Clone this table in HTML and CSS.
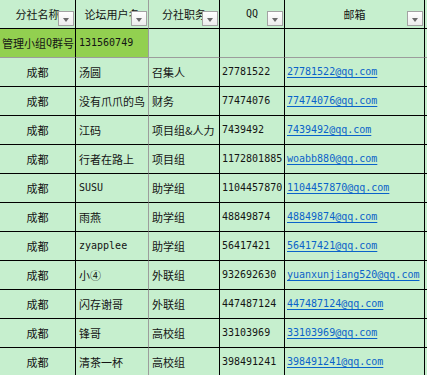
FILE: index.html
```html
<!DOCTYPE html>
<html lang="zh-CN">
<head>
<meta charset="utf-8">
<title>分社通讯录</title>
<link rel="stylesheet" href="styles.css">
</head>
<body>
<div class="sheet">
  <div class="cell head"><span class="htext">分社名称</span><span class="dd"></span></div>
  <div class="cell head soft-r"><span class="htext">论坛用户名</span><span class="dd"></span></div>
  <div class="cell head"><span class="htext">分社职务</span><span class="dd"></span></div>
  <div class="cell head"><span class="htext en">QQ</span><span class="dd"></span></div>
  <div class="cell head"><span class="htext">邮箱</span><span class="dd"></span></div>
  <div class="cell pad"></div>

  <div class="cell hl soft-b tight">管理小组<span class="en">Q</span>群号</div>
  <div class="cell hl soft-b soft-r"><span class="en">131560749</span></div>
  <div class="cell soft-b"></div>
  <div class="cell soft-b"></div>
  <div class="cell soft-b"></div>
  <div class="cell pad soft-b"></div>

  <div class="cell ctr">成都</div><div class="cell soft-r">汤圆</div><div class="cell">召集人</div><div class="cell en">27781522</div><div class="cell"><a class="mail en" href="#">27781522@qq.com</a></div><div class="cell pad"></div>
  <div class="cell ctr">成都</div><div class="cell soft-r">没有爪爪的鸟</div><div class="cell">财务</div><div class="cell en">77474076</div><div class="cell"><a class="mail en" href="#">77474076@qq.com</a></div><div class="cell pad"></div>
  <div class="cell ctr">成都</div><div class="cell soft-r">江码</div><div class="cell">项目组&amp;人力</div><div class="cell en">7439492</div><div class="cell"><a class="mail en" href="#">7439492@qq.com</a></div><div class="cell pad"></div>
  <div class="cell ctr">成都</div><div class="cell soft-r">行者在路上</div><div class="cell">项目组</div><div class="cell en">1172801885</div><div class="cell"><a class="mail en" href="#">woabb880@qq.com</a></div><div class="cell pad"></div>
  <div class="cell ctr">成都</div><div class="cell soft-r"><span class="en">SUSU</span></div><div class="cell">助学组</div><div class="cell en">1104457870</div><div class="cell"><a class="mail en" href="#">1104457870@qq.com</a></div><div class="cell pad"></div>
  <div class="cell ctr">成都</div><div class="cell soft-r">雨燕</div><div class="cell">助学组</div><div class="cell en">48849874</div><div class="cell"><a class="mail en" href="#">48849874@qq.com</a></div><div class="cell pad"></div>
  <div class="cell ctr">成都</div><div class="cell soft-r"><span class="en">zyapplee</span></div><div class="cell">助学组</div><div class="cell en">56417421</div><div class="cell"><a class="mail en" href="#">56417421@qq.com</a></div><div class="cell pad"></div>
  <div class="cell ctr">成都</div><div class="cell soft-r">小④</div><div class="cell">外联组</div><div class="cell en">932692630</div><div class="cell"><a class="mail en" href="#">yuanxunjiang520@qq.com</a></div><div class="cell pad"></div>
  <div class="cell ctr">成都</div><div class="cell soft-r">闪存谢哥</div><div class="cell">外联组</div><div class="cell en">447487124</div><div class="cell"><a class="mail en" href="#">447487124@qq.com</a></div><div class="cell pad"></div>
  <div class="cell ctr">成都</div><div class="cell soft-r">锋哥</div><div class="cell">高校组</div><div class="cell en">33103969</div><div class="cell"><a class="mail en" href="#">33103969@qq.com</a></div><div class="cell pad"></div>
  <div class="cell ctr">成都</div><div class="cell soft-r">清茶一杯</div><div class="cell">高校组</div><div class="cell en">398491241</div><div class="cell"><a class="mail en" href="#">398491241@qq.com</a></div><div class="cell pad"></div>
</div>
</body>
</html>
```

FILE: styles.css
```css
html, body {
  margin: 0;
  padding: 0;
  background: #c6efce;
}

body {
  width: 427px;
  height: 375px;
  overflow: hidden;
  font-family: "Noto Sans CJK SC", sans-serif;
  font-size: 11px;
  color: #141414;
}

.sheet {
  display: grid;
  grid-template-columns: 76px 73px 71px 65px 140px 2px;
  grid-auto-rows: 29px;
}

.cell {
  box-sizing: border-box;
  border-right: 1px solid #000;
  border-bottom: 1px solid #000;
  display: flex;
  align-items: center;
  padding: 0 2px 0 3px;
  white-space: nowrap;
  overflow: hidden;
  line-height: 14px;
}

.cell.pad {
  border-right: none;
  padding: 0;
}

.cell.tight {
  padding: 0 0 0 2px;
}

.soft-r {
  border-right-color: #9c9c9c;
}

.soft-b {
  border-bottom-color: #9c9c9c;
}

.ctr {
  justify-content: center;
  padding: 0;
}

.head {
  position: relative;
  justify-content: center;
  padding: 0;
}

.htext {
  display: block;
}

.hl {
  background: #92d050;
}

.en {
  font-family: "DejaVu Sans Mono", "Liberation Mono", monospace;
  font-size: 10px;
}

.cell.en {
  padding-left: 2px;
}

.mail {
  color: #0a62c9;
  text-decoration: underline;
  text-underline-offset: 2px;
  margin-left: -1px;
}

.dd {
  position: absolute;
  right: 1px;
  bottom: 2px;
  width: 16px;
  height: 15px;
  box-sizing: border-box;
  border: 1px solid #a3a3a3;
  background: linear-gradient(#ffffff, #ececec);
}

.dd::after {
  content: "";
  position: absolute;
  left: 4px;
  top: 6px;
  border-left: 3.5px solid transparent;
  border-right: 3.5px solid transparent;
  border-top: 4px solid #6a6a6a;
}
```
